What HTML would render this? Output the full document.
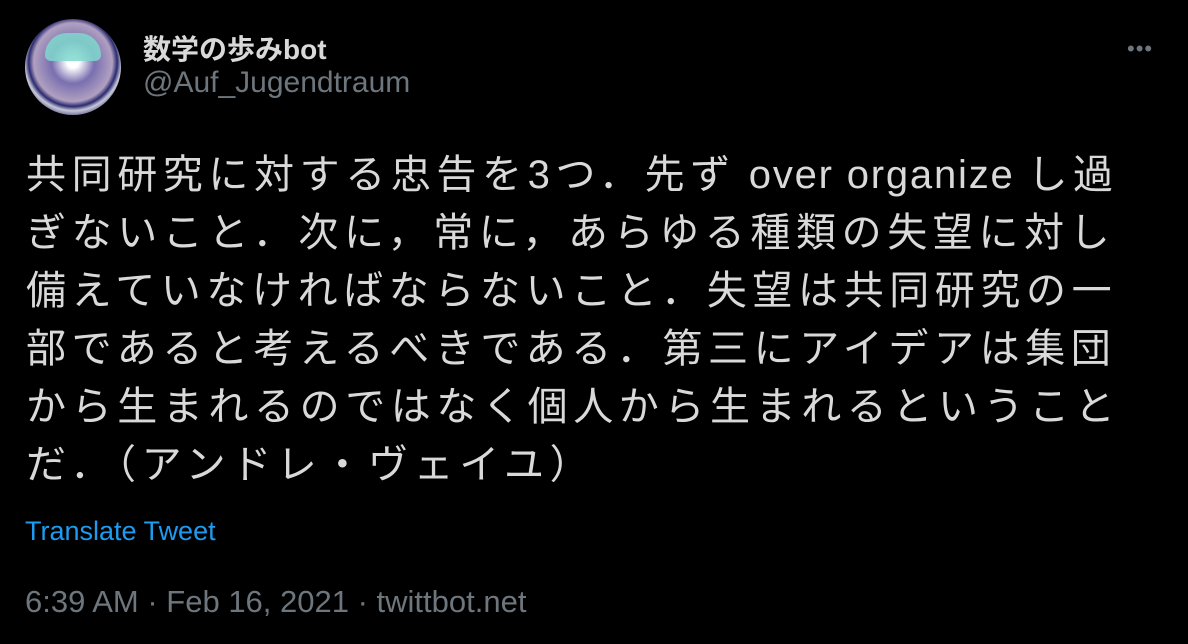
<!DOCTYPE html>
<html><head><meta charset="utf-8"><style>
body{margin:0;width:1188px;height:644px;background:#000;overflow:hidden;font-family:"Liberation Sans","Noto Sans CJK JP",sans-serif;position:relative}
.av{position:absolute;left:25px;top:19px;width:96px;height:96px;border-radius:50%;background:radial-gradient(circle at 50% 45%,#fff 0 8%,#7a6fb0 30%,#b0a0c0 55%,#2a2a70 62%,#c8c8d8 68%,#30306a 80%,#e0e0e8 88%,#1a1a5a 94%,#000 100%)}
.av:after{content:"";position:absolute;left:20px;top:14px;width:56px;height:28px;border-radius:30px 30px 8px 8px;background:#7fd8cc;opacity:.85}
.name{position:absolute;left:143px;top:28px;color:#d9d9d9;font-weight:bold;font-size:28px}
.handle{position:absolute;left:143px;top:66px;color:#6e767d;font-size:30px}
.dots{position:absolute;left:1127px;top:36px;color:#6e767d;font-size:22px;letter-spacing:1px}
.body{position:absolute;left:26px;top:146px;color:#d9d9d9;font-size:40px;letter-spacing:5.6px;line-height:58px;white-space:nowrap}
.l{letter-spacing:1.8px}
.tr{position:absolute;left:25px;top:516px;color:#1d9bf0;font-size:27px}
.meta{position:absolute;left:25px;top:584px;color:#6e767d;font-size:31px}
</style></head><body>
<div class="av"></div>
<div class="name">数学の歩みbot</div>
<div class="handle">@Auf_Jugendtraum</div>
<div class="dots">•••</div>
<div class="body">
<div>共同研究に対する忠告を3つ．先ず<span class="l"> over organize </span>し過</div>
<div>ぎないこと．次に，常に，あらゆる種類の失望に対し</div>
<div>備えていなければならないこと．失望は共同研究の一</div>
<div>部であると考えるべきである．第三にアイデアは集団</div>
<div>から生まれるのではなく個人から生まれるということ</div>
<div>だ．（アンドレ・ヴェイユ）</div>
</div>
<div class="tr">Translate Tweet</div>
<div class="meta">6:39 AM · Feb 16, 2021 · twittbot.net</div>
</body></html>
